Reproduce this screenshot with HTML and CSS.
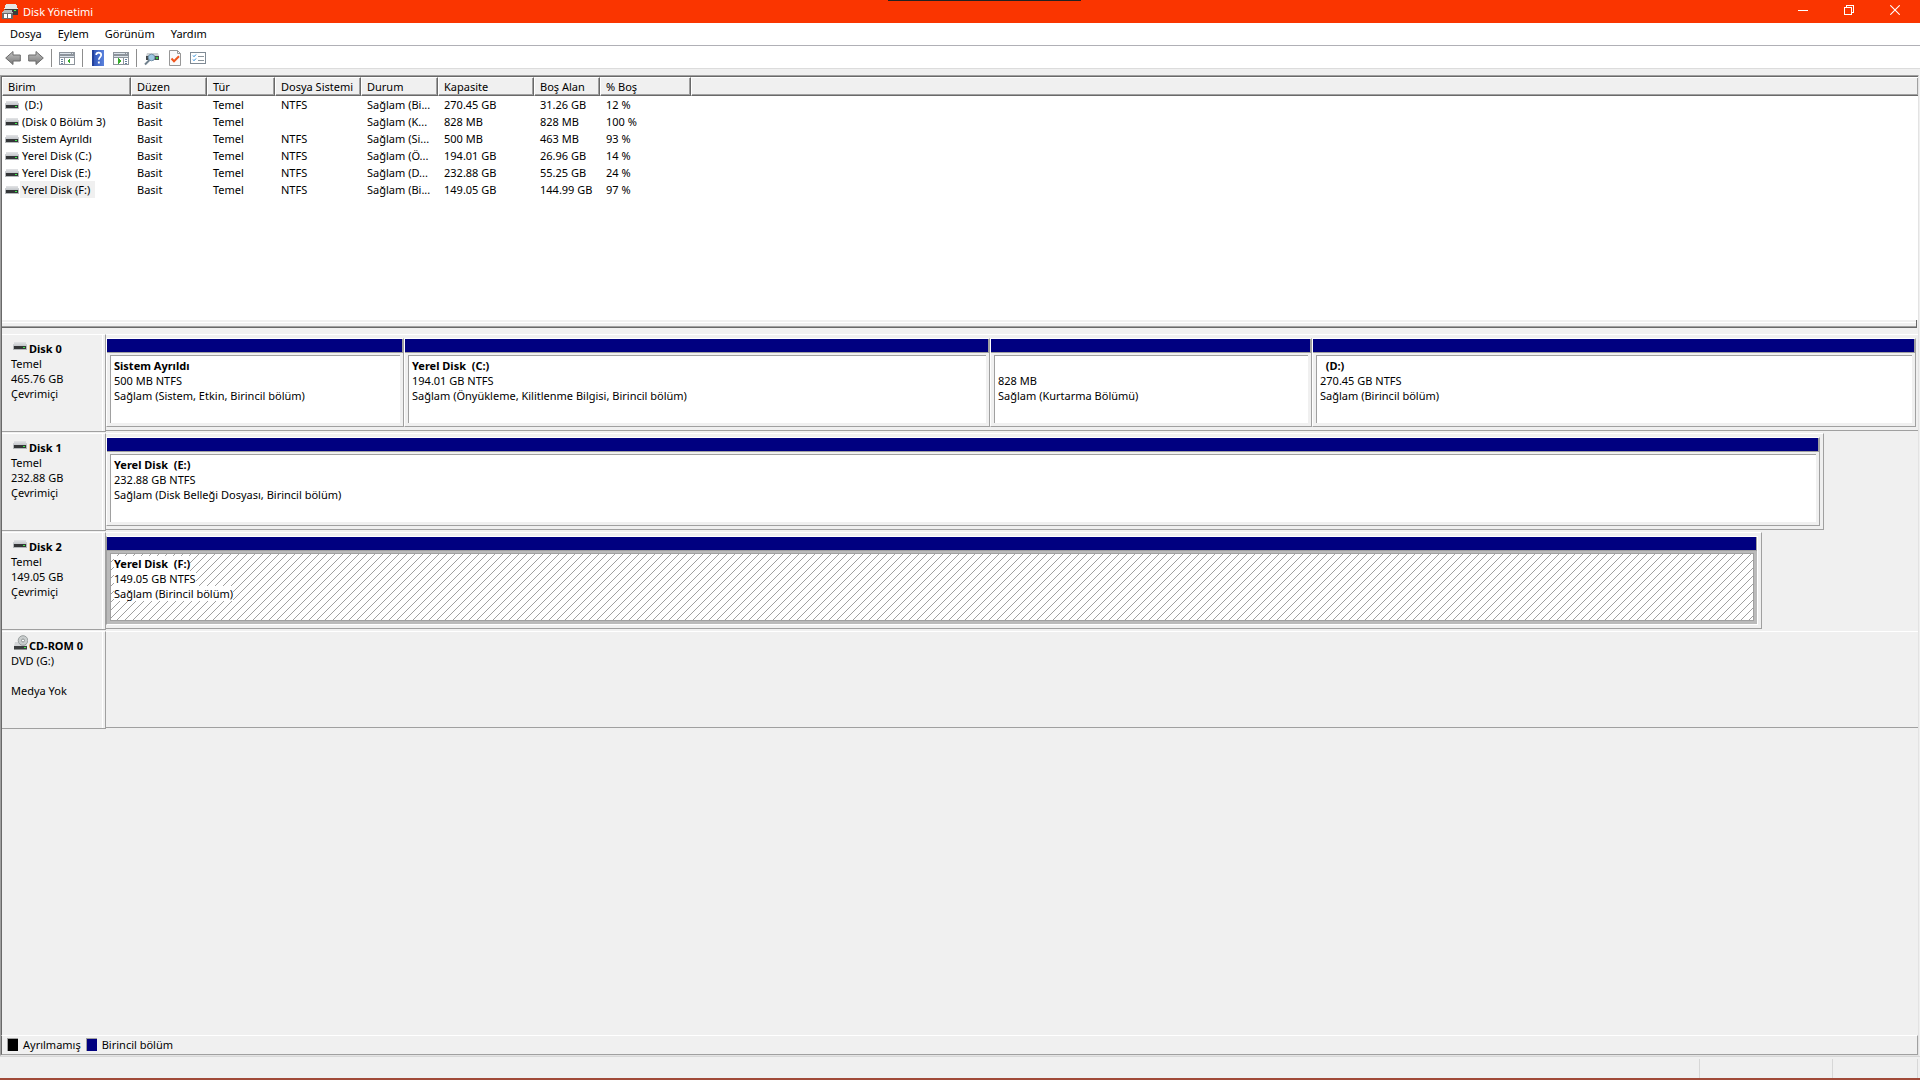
FILE: index.html
```html
<!DOCTYPE html>
<html lang="tr">
<head>
<meta charset="utf-8">
<title>Disk Yönetimi</title>
<link rel="stylesheet" href="styles.css">
</head>
<body>
<svg class="defs" aria-hidden="true">
  <defs>
    <linearGradient id="lid" x1="0" y1="0" x2="0" y2="1"><stop offset="0" stop-color="#e3e4e6"/><stop offset="1" stop-color="#c3c6ca"/></linearGradient>
    <linearGradient id="arrow" x1="0" y1="0" x2="0" y2="1"><stop offset="0" stop-color="#c4c4c4"/><stop offset="1" stop-color="#777"/></linearGradient>
    <linearGradient id="book" x1="0" y1="0" x2="1" y2="0"><stop offset="0" stop-color="#2b4fb4"/><stop offset="1" stop-color="#5a82dc"/></linearGradient>
    <symbol id="drive" viewBox="0 0 14 8">
      <path d="M1 0h12l1 4H0z" fill="url(#lid)"/>
      <path d="M0 4h14v4H0z" fill="#b4b8ba"/>
      <path d="M1 4h12v3H1z" fill="#343638"/>
      <path d="M10 5h2v1h-2z" fill="#3cf04a"/>
    </symbol>
  </defs>
</svg>
<header class="titlebar">
  <svg class="app-icon" viewBox="0 0 16 16" aria-hidden="true">
    <path d="M4 0h10l2 5H2z" fill="#e6e6e6"/><path d="M3 5h13v6H3z" fill="#3b3b3b"/><path d="M12 6h2v1h-2z" fill="#3cf04a"/>
    <path d="M2 6h8l1 3H0z" fill="#b9b9b9"/><path d="M0 9h11v6H0z" fill="#6b6b6b"/><path d="M2 10h3v4H2zM6 10h3v4H6z" fill="#fff"/>
  </svg>
  <h1 class="title">Disk Yönetimi</h1>
  <div class="window-controls">
    <button type="button" aria-label="Simge durumuna küçült"><svg viewBox="0 0 10 10"><path d="M0 5h10v1H0z" fill="#fff"/></svg></button>
    <button type="button" aria-label="Önceki boyut"><svg viewBox="0 0 10 10"><path d="M.5 2.500h7v7h-7zM2.500 2.500v-2h7v7h-2" fill="none" stroke="#fff"/></svg></button>
    <button type="button" aria-label="Kapat"><svg class="smooth" viewBox="0 0 10 10"><path d="M.3.3l9.400 9.400M9.700.3L.3 9.700" fill="none" stroke="#fff" stroke-width="1.100"/></svg></button>
  </div>
  <div class="top-edge"></div>
</header>
<nav class="menubar">
  <button type="button">Dosya</button><button type="button">Eylem</button><button type="button">Görünüm</button><button type="button">Yardım</button>
</nav>
<div class="toolbar" role="toolbar" aria-label="Araçlar">
  <button type="button" aria-label="Geri"><svg class="smooth" viewBox="0 0 16 16"><path d="M.7 8L8 1.500V5h7.300v6H8v3.500z" fill="url(#arrow)" stroke="#6c6c6c"/></svg></button>
  <button type="button" aria-label="İleri"><svg class="smooth" viewBox="0 0 16 16"><path d="M15.300 8L8 1.500V5H.7v6H8v3.500z" fill="url(#arrow)" stroke="#6c6c6c"/></svg></button>
  <span class="sep"></span>
  <button type="button" aria-label="Konsol ağacı"><svg viewBox="0 0 16 16"><path d="M0 2h16v13H0z" fill="#8d949c"/><path d="M1 3h11v1H1zM13 3h1v1h-1z" fill="#dce3ea"/><path d="M1 6h14v1H1z" fill="#dce3ea"/><path d="M1 8h4v6H1zM6 8h9v6H6z" fill="#fff"/><path d="M2 9h2v1H2zM2 11h2v1H2zM2 13h2v1H2z" fill="#65809c"/><path d="M11 8v6l-3-3z" fill="#35ad2b"/></svg></button>
  <span class="sep"></span>
  <button type="button" aria-label="Yardım"><svg class="smooth" viewBox="0 0 16 16"><path d="M2 0h12v16H2z" fill="url(#book)"/><path d="M2 0h2v16H2z" fill="#23419b"/><path d="M6.200 5c0-3.200 5-3.200 5 0 0 2-2.400 2.200-2.400 4.800" fill="none" stroke="#fff" stroke-width="1.700"/><path d="M7.900 11.500h1.900v2H7.900z" fill="#fff"/></svg></button>
  <button type="button" aria-label="Eylem bölmesi"><svg viewBox="0 0 16 16"><path d="M0 2h16v13H0z" fill="#8d949c"/><path d="M1 3h11v1H1zM13 3h1v1h-1z" fill="#dce3ea"/><path d="M1 6h14v1H1z" fill="#dce3ea"/><path d="M1 8h9v6H1zM11 8h4v6h-4z" fill="#fff"/><path d="M12 9h2v1h-2zM12 11h2v1h-2zM12 13h2v1h-2z" fill="#65809c"/><path d="M5 8v6l3-3z" fill="#35ad2b"/></svg></button>
  <span class="sep"></span>
  <button type="button" aria-label="Diskleri yeniden tara"><svg class="smooth" viewBox="0 0 16 16"><path d="M3 3h11l1 3H2z" fill="#ccd0d3"/><path d="M2 6h13v4H2z" fill="#45494b"/><path d="M12 7h2v2h-2z" fill="#37c840"/><path d="M5.500 10L1 14.500" stroke="#71818d" stroke-width="2"/><circle cx="7.500" cy="7.500" r="3.300" fill="#9dc6e2" stroke="#718fa5"/></svg></button>
  <button type="button" aria-label="Özellikler"><svg class="smooth" viewBox="0 0 16 16"><path d="M2.500.5h8l3 3v12h-11z" fill="#fafafa" stroke="#979797"/><path d="M10.500.5v3h3" fill="none" stroke="#979797"/><path d="M4.500 8.500L7 11.200l5-5" fill="none" stroke="#f0561d" stroke-width="2"/></svg></button>
  <button type="button" aria-label="Görünüm ayarları"><svg viewBox="0 0 16 16"><path d="M0 2h16v12H0z" fill="#7f8a94"/><path d="M1 3h14v10H1z" fill="#fff"/><path d="M8 6h6v1H8zM8 10h6v1H8z" fill="#8b969e"/><path class="smooth" d="M3 5.500l1 1.200L6 4.500M3 9.500l1 1.200L6 8.500" stroke="#268bda" fill="none"/></svg></button>
</div>
<main class="console">
  <section class="volume-list">
    <table>
      <colgroup><col class="c-name"><col class="c-layout"><col class="c-type"><col class="c-fs"><col class="c-status"><col class="c-cap"><col class="c-free"><col class="c-pct"><col></colgroup>
      <thead><tr><th>Birim</th><th>Düzen</th><th>Tür</th><th>Dosya Sistemi</th><th>Durum</th><th>Kapasite</th><th>Boş Alan</th><th>% Boş</th><td></td></tr></thead>
      <tbody>
        <tr><td><svg class="drive"><use href="#drive"/></svg><span class="name">&nbsp;(D:)</span></td><td>Basit</td><td>Temel</td><td>NTFS</td><td>Sağlam (Bi...</td><td>270.45 GB</td><td>31.26 GB</td><td>12 %</td><td></td></tr>
        <tr><td><svg class="drive"><use href="#drive"/></svg><span class="name">(Disk 0 Bölüm 3)</span></td><td>Basit</td><td>Temel</td><td></td><td>Sağlam (K...</td><td>828 MB</td><td>828 MB</td><td>100 %</td><td></td></tr>
        <tr><td><svg class="drive"><use href="#drive"/></svg><span class="name">Sistem Ayrıldı</span></td><td>Basit</td><td>Temel</td><td>NTFS</td><td>Sağlam (Si...</td><td>500 MB</td><td>463 MB</td><td>93 %</td><td></td></tr>
        <tr><td><svg class="drive"><use href="#drive"/></svg><span class="name">Yerel Disk (C:)</span></td><td>Basit</td><td>Temel</td><td>NTFS</td><td>Sağlam (Ö...</td><td>194.01 GB</td><td>26.96 GB</td><td>14 %</td><td></td></tr>
        <tr><td><svg class="drive"><use href="#drive"/></svg><span class="name">Yerel Disk (E:)</span></td><td>Basit</td><td>Temel</td><td>NTFS</td><td>Sağlam (D...</td><td>232.88 GB</td><td>55.25 GB</td><td>24 %</td><td></td></tr>
        <tr><td><svg class="drive"><use href="#drive"/></svg><span class="name current">Yerel Disk (F:)</span></td><td>Basit</td><td>Temel</td><td>NTFS</td><td>Sağlam (Bi...</td><td>149.05 GB</td><td>144.99 GB</td><td>97 %</td><td></td></tr>
      </tbody>
    </table>
  </section>
  <div class="splitter"></div>
  <section class="disks">
    <article class="disk">
      <div class="label"><h2><svg class="drive"><use href="#drive"/></svg>Disk 0</h2><p>Temel</p><p>465.76 GB</p><p>Çevrimiçi</p></div>
      <div class="track full">
        <div class="volume" style="flex-grow:296"><div class="bar"></div><div class="frame"><div class="info"><h3>Sistem Ayrıldı</h3><p>500 MB NTFS</p><p>Sağlam (Sistem, Etkin, Birincil bölüm)</p></div></div></div>
        <div class="volume" style="flex-grow:584"><div class="bar"></div><div class="frame"><div class="info"><h3>Yerel Disk &nbsp;(C:)</h3><p>194.01 GB NTFS</p><p>Sağlam (Önyükleme, Kilitlenme Bilgisi, Birincil bölüm)</p></div></div></div>
        <div class="volume" style="flex-grow:320"><div class="bar"></div><div class="frame"><div class="info"><h3>&nbsp;</h3><p>828 MB</p><p>Sağlam (Kurtarma Bölümü)</p></div></div></div>
        <div class="volume" style="flex-grow:602"><div class="bar"></div><div class="frame"><div class="info"><h3>&nbsp; (D:)</h3><p>270.45 GB NTFS</p><p>Sağlam (Birincil bölüm)</p></div></div></div>
      </div>
    </article>
    <article class="disk">
      <div class="label"><h2><svg class="drive"><use href="#drive"/></svg>Disk 1</h2><p>Temel</p><p>232.88 GB</p><p>Çevrimiçi</p></div>
      <div class="lane"><div class="track" style="width:94.8%">
        <div class="volume"><div class="bar"></div><div class="frame"><div class="info"><h3>Yerel Disk &nbsp;(E:)</h3><p>232.88 GB NTFS</p><p>Sağlam (Disk Belleği Dosyası, Birincil bölüm)</p></div></div></div>
      </div></div>
    </article>
    <article class="disk">
      <div class="label"><h2><svg class="drive"><use href="#drive"/></svg>Disk 2</h2><p>Temel</p><p>149.05 GB</p><p>Çevrimiçi</p></div>
      <div class="lane"><div class="track" style="width:91.4%">
        <div class="volume selected"><div class="bar"></div><div class="frame"><div class="info"><h3>Yerel Disk &nbsp;(F:)</h3><p>149.05 GB NTFS</p><p>Sağlam (Birincil bölüm)</p></div></div></div>
      </div></div>
    </article>
    <article class="disk">
      <div class="label"><h2><svg class="cdrom smooth" viewBox="0 0 15 15"><path d="M2 7h11l1 4H1z" fill="#d2d4d6"/><circle cx="10" cy="5.500" r="4.800" fill="#c9cdcd" stroke="#999e9e"/><circle cx="10" cy="5.500" r="1.500" fill="#fff" stroke="#8d9292"/><path d="M1 11h13v4H1z" fill="#8d9090"/><path d="M1 11h13v3H1z" fill="#3b3d3e"/><path d="M11 12h2v1h-2z" fill="#3cf04a"/></svg>CD-ROM 0</h2><p>DVD (G:)</p><p>&nbsp;</p><p>Medya Yok</p></div>
      <div class="track full"></div>
    </article>
  </section>
  <ul class="legend"><li><span class="swatch free"></span>Ayrılmamış</li><li><span class="swatch primary"></span>Birincil bölüm</li></ul>
</main>
<footer class="statusbar"><span class="pane main-pane"></span><span class="pane"></span><span class="pane last-pane"></span></footer>
<div class="bottom-edge"></div>
</body>
</html>
```
FILE: styles.css
```css
* { box-sizing: border-box; }
body {
  margin: 0;
  min-height: 100vh;
  display: flex;
  flex-direction: column;
  background: #f0f0f0;
  color: #000;
  font: 11px/15px "Noto Sans", "Open Sans", sans-serif;
}
h1, h2, h3, p, ul { margin: 0; padding: 0; font-size: inherit; list-style: none; }
button { border: 0; padding: 0; background: none; font: inherit; color: inherit; }
svg { display: block; flex: none; shape-rendering: crispEdges; }
.smooth { shape-rendering: auto; }
.defs { position: absolute; width: 0; height: 0; }

.titlebar { position: relative; display: flex; align-items: center; height: 23px; padding: 0 2px; background: #fa3500; color: #fff; }
.app-icon { width: 16px; height: 16px; }
.title { flex: 1; padding-left: 5px; font-weight: 400; }
.window-controls { display: flex; height: 20px; align-self: flex-start; }
.window-controls button { width: 46px; display: grid; place-items: center; }
.window-controls svg { width: 10px; height: 10px; }
.top-edge { position: absolute; top: 0; left: 46.25%; width: 193px; height: 1px; background: #222; }

.menubar { display: flex; height: 23px; padding: 0 2px 2px; background: #fff; border-bottom: 1px solid #b0b0b6; }
.menubar button { padding: 0 8px; }

.toolbar { display: flex; align-items: center; height: 23px; padding: 2px 5px 0; gap: 7px; background: #fff; border-bottom: 1px solid #dcdcdc; }
.toolbar svg { width: 16px; height: 16px; }
.sep { width: 1px; height: 18px; background: #8d8d8d; }

.console { flex: 1; display: flex; flex-direction: column; margin: 6px 1px 0 0; border: 1px solid; border-color: #a0a0a0 #e3e3e3 #e3e3e3 #a0a0a0; }
.volume-list, .splitter, .disks, .legend { border-left: 1px solid #696969; }
.volume-list { height: 244px; background: #fff; border-top: 1px solid #696969; }
table { width: 100%; table-layout: fixed; border-collapse: separate; border-spacing: 0; }
.c-name { width: 129px; } .c-layout { width: 76px; } .c-type { width: 68px; } .c-fs { width: 86px; }
.c-status { width: 77px; } .c-cap { width: 96px; } .c-free { width: 66px; } .c-pct { width: 91px; }
th, td { padding: 0 0 0 6px; text-align: left; font-weight: 400; white-space: nowrap; overflow: hidden; }
thead th, thead td { height: 19px; background: #f0f0f0; border: 1px solid; border-color: #fff #696969 #696969 #fff; box-shadow: inset -1px -1px #a0a0a0; padding-left: 5px; }
thead td { border-right: 0; }
tbody td { height: 17px; line-height: 17px; }
tbody td:first-child { display: flex; align-items: center; padding-left: 3px; }
.drive { width: 14px; height: 8px; }
.name { padding: 0 5px 0 2px; margin-left: 1px; }
.current { background: #f0f0f0; }
.splitter { height: 8px; margin-right: 1px; border-bottom: 1px solid #696969; border-right: 1px solid #696969; background: linear-gradient(#f0f0f0 2px, #fff 2px 3px, #f0f0f0 3px 6px, #a0a0a0 6px); }

.disks { flex: 1; padding-top: 6px; }
.disk { display: flex; height: 99px; }
.label { width: 104px; height: 98px; padding: 6px 0 0 9px; border: solid; border-width: 1px 1px 1px 0; border-color: #fff #a0a0a0 #a0a0a0; box-shadow: inset -2px 0 #f0f0f0, inset -3px 0 #fff; }
.label h2 { display: flex; height: 15px; padding-left: 2px; gap: 2px; white-space: nowrap; }
.label .drive { margin-top: 1px; }
.cdrom { width: 15px; height: 15px; margin: -3px -1px 0 0; }
.lane { flex: 1; }
.track { display: flex; height: 97px; padding: 3px 3px 3px 0; border: solid; border-width: 1px 1px 1px 0; border-color: #fff #a0a0a0 #a0a0a0; }
.full { flex: 1; border-right: 0; padding-right: 2px; }
.volume { flex: 1 1 0; display: flex; flex-direction: column; min-width: 0; border: 1px solid; border-color: #fff #a0a0a0 #a0a0a0 #fff; }
.bar { height: 14px; background: #000080; border: solid #a0a0a0; border-width: 0 1px 1px 0; }
.frame { flex: 1; padding: 2px 3px 3px; }
.info { height: 100%; padding: 2px 3px; background: #fff; border: solid #a0a0a0; border-width: 1px 0 0 1px; white-space: nowrap; }
.selected { border-color: #fff #fff #fff #a0a0a0; }
.selected .frame { background: #bababa; }
.selected .info {
  border-width: 1px;
  background: #fff url("data:image/svg+xml,%3Csvg xmlns='http://www.w3.org/2000/svg' width='8' height='8' shape-rendering='crispEdges'%3E%3Cpath d='M0 7h1v1H0zM1 6h1v1H1zM2 5h1v1H2zM3 4h1v1H3zM4 3h1v1H4zM5 2h1v1H5zM6 1h1v1H6zM7 0h1v1H7z' fill='%23a0a0a0'/%3E%3C/svg%3E");
}
.selected h3, .selected p { width: max-content; background: #fff; }

.legend { display: flex; gap: 5px; height: 20px; padding: 1px 5px 2px; border-top: 1px solid #fff; border-right: 1px solid #a0a0a0; border-bottom: 1px solid #a0a0a0; }
.legend li { display: flex; gap: 5px; align-items: center; }
.swatch { width: 11px; height: 13px; border: solid #a0a0a0; border-width: 1px 0 0 1px; }
.free { background: #000; }
.primary { background: #000080; }
.statusbar { display: flex; height: 22px; padding: 2px 2px 0 0; border-top: 1px solid #d7d7d7; }
.pane { width: 133px; border-right: 1px solid #d7d7d7; }
.main-pane { flex: 1; }
.last-pane { width: 85px; }
.bottom-edge { height: 2px; background: #a04a38; }
```
